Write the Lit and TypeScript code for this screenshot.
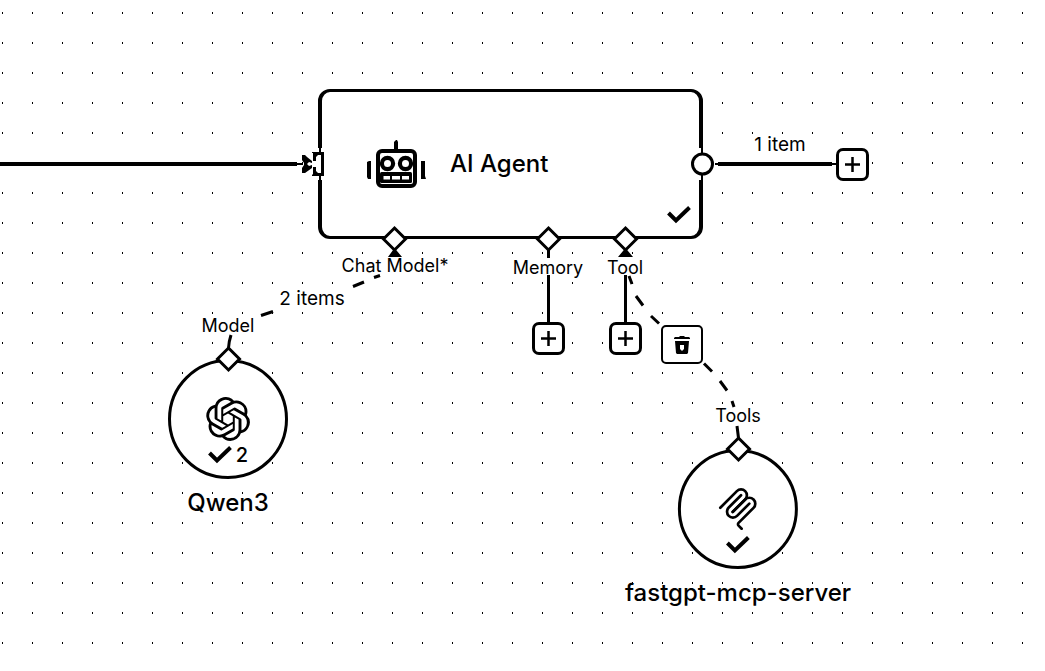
import { LitElement, html, svg, css } from "lit";
import { customElement, property } from "lit/decorators.js";
import { styleMap } from "lit/directives/style-map.js";

type Point = { x: number; y: number };
type Label = Point & { text: string; kind?: string };

const at = (p: Point) => styleMap({ left: `${p.x}px`, top: `${p.y}px` });

const LABELS: Label[] = [
  { text: "1 item", x: 780, y: 145, kind: "count" },
  { text: "Chat Model*", x: 395, y: 266 },
  { text: "Memory", x: 548, y: 268 },
  { text: "Tool", x: 625, y: 268 },
  { text: "2 items", x: 312, y: 299, kind: "count" },
  { text: "Model", x: 228, y: 326 },
  { text: "Tools", x: 738, y: 416 },
];

const ADD_BUTTONS: (Point & { name: string })[] = [
  { name: "Add next step", x: 836, y: 148 },
  { name: "Add memory", x: 532, y: 322 },
  { name: "Add tool", x: 609, y: 322 },
];

const DIAMONDS: Point[] = [
  { x: 394, y: 239 },
  { x: 548, y: 239 },
  { x: 625, y: 239 },
  { x: 228, y: 359 },
  { x: 738, y: 449 },
];

const checkIcon = html`<svg class="check" width="24" height="18" viewBox="0 0 24 18" aria-hidden="true">
  <path d="M1.5 7L9 14.5L22.5 1.5" fill="none" stroke="#000" stroke-width="4" />
</svg>`;

const robotIcon = html`<svg class="robot" width="60" height="50" viewBox="0 0 60 50" aria-hidden="true">
  <path d="M28 11V3L30 1H31L32 3V11Z" />
  <path d="M1 23L3 22H5V40H2L1 38ZM55 22H59V37L60 40H55Z" />
  <rect x="12" y="12" width="37" height="35" rx="4" fill="#fff" stroke="#000" stroke-width="4" />
  <circle cx="21.5" cy="24.5" r="5.6" fill="#fff" stroke="#000" stroke-width="4.2" />
  <circle cx="39.5" cy="24.5" r="5.6" fill="#fff" stroke="#000" stroke-width="4.2" />
  <rect x="14" y="33" width="32" height="11" rx="1.5" />
  <path d="M17.5 37H24V40.5H17.5ZM26 37H34V40.5H26ZM36 37H43V40.5H36Z" fill="#fff" />
</svg>`;

const openaiIcon = html`<svg width="44" height="44" viewBox="0 0 24 24" aria-hidden="true">
  <path d="M22.2819 9.8211a5.9847 5.9847 0 0 0-.5157-4.9108 6.0462 6.0462 0 0 0-6.5098-2.9A6.0651 6.0651 0 0 0 4.9807 4.1818a5.9847 5.9847 0 0 0-3.9977 2.9 6.0462 6.0462 0 0 0 .7427 7.0966 5.98 5.98 0 0 0 .511 4.9107 6.051 6.051 0 0 0 6.5146 2.9001A5.9847 5.9847 0 0 0 13.2599 24a6.0557 6.0557 0 0 0 5.7718-4.2058 5.9894 5.9894 0 0 0 3.9977-2.9001 6.0557 6.0557 0 0 0-.7475-7.0729zm-9.022 12.6081a4.4755 4.4755 0 0 1-2.8764-1.0408l.1419-.0804 4.7783-2.7582a.7948.7948 0 0 0 .3927-.6813v-6.7369l2.02 1.1686a.071.071 0 0 1 .038.052v5.5826a4.504 4.504 0 0 1-4.4945 4.4944zm-9.6607-4.1254a4.4708 4.4708 0 0 1-.5346-3.0137l.142.0852 4.783 2.7582a.7712.7712 0 0 0 .7806 0l5.8428-3.3685v2.3324a.0804.0804 0 0 1-.0332.0615L9.74 19.9502a4.4992 4.4992 0 0 1-6.1408-1.6464zM2.3408 7.8956a4.485 4.485 0 0 1 2.3655-1.9728V11.6a.7664.7664 0 0 0 .3879.6765l5.8144 3.3543-2.0201 1.1685a.0757.0757 0 0 1-.071 0l-4.8303-2.7865A4.504 4.504 0 0 1 2.3408 7.872zm16.5963 3.8558L13.1038 8.364 15.1192 7.2a.0757.0757 0 0 1 .071 0l4.8303 2.7913a4.4944 4.4944 0 0 1-.6765 8.1042v-5.6772a.79.79 0 0 0-.407-.667zm2.0107-3.0231l-.142-.0852-4.7735-2.7818a.7759.7759 0 0 0-.7854 0L9.409 9.2297V6.8974a.0662.0662 0 0 1 .0284-.0615l4.8303-2.7866a4.4992 4.4992 0 0 1 6.6802 4.66zM8.3065 12.863l-2.02-1.1638a.0804.0804 0 0 1-.038-.0567V6.0742a4.4992 4.4992 0 0 1 7.3757-3.4537l-.142.0805L8.704 5.459a.7948.7948 0 0 0-.3927.6813zm1.0976-2.3654l2.602-1.4998 2.6069 1.4998v2.9994l-2.5974 1.4997-2.6067-1.4997Z" />
</svg>`;

const mcpIcon = html`<svg width="44" height="44" viewBox="0 0 180 180" aria-hidden="true">
  <g fill="none" stroke="#000" stroke-width="11" stroke-linecap="round">
    <path d="M18 84.8528L85.8822 16.9706C95.2548 7.59798 110.451 7.59798 119.823 16.9706C129.196 26.3431 129.196 41.5391 119.823 50.9117L68.5581 102.177" />
    <path d="M69.2652 101.47L119.823 50.9117C129.196 41.5391 144.392 41.5391 153.765 50.9117L154.118 51.2652C163.491 60.6378 163.491 75.8338 154.118 85.2063L92.7248 146.6C89.6006 149.724 89.6006 154.789 92.7248 157.913L105.331 170.52" />
    <path d="M102.853 33.9411L52.6482 84.1457C43.2756 93.5183 43.2756 108.714 52.6482 118.087C62.0208 127.459 77.2167 127.459 86.5893 118.087L136.794 67.8822" />
  </g>
</svg>`;

const trashIcon = html`<svg width="16" height="18" viewBox="0 0 16 18" aria-hidden="true">
  <path d="M1 1H5L6 0H10L11 1H15L16 2V3H0V2Z" />
  <path d="M1 5H15L14 17L13 18H3L2 17ZM6 9V13L8 15L10 13V9Z" fill-rule="evenodd" />
</svg>`;

@customElement("sub-node")
class SubNode extends LitElement {
  @property() name = "";
  @property() runs = "";
  @property({ attribute: false }) icon: unknown;

  static styles = css`
    :host { display: flex; flex-direction: column; align-items: center; gap: 8px; }
    .disc {
      box-sizing: border-box;
      width: 120px;
      height: 120px;
      padding-top: 35px;
      border: 3px solid #000;
      border-radius: 50%;
      background: #fff;
      display: flex;
      flex-direction: column;
      align-items: center;
      gap: 4px;
    }
    svg { display: block; }
    .status { display: flex; align-items: center; gap: 4px; height: 20px; font-size: 20px; line-height: 20px; font-weight: 500; }
    .name { font-size: 24px; line-height: 32px; font-weight: 500; white-space: nowrap; }
  `;

  render() {
    return html`
      <div class="disc">
        ${this.icon}
        <div class="status">${checkIcon}${this.runs ? html`<span>${this.runs}</span>` : null}</div>
      </div>
      <div class="name">${this.name}</div>
    `;
  }
}

@customElement("app-root")
class AppRoot extends LitElement {
  static styles = css`
    :host {
      display: block;
      color: #000;
      font-family: Inter, "Liberation Sans", sans-serif;
    }
    .canvas {
      position: relative;
      min-height: 100vh;
      overflow: hidden;
      background: #fff;
    }
    .wires, .handles, .grid { position: absolute; inset: 0; width: 100%; height: 100%; pointer-events: none; }
    .agent {
      position: absolute;
      box-sizing: border-box;
      width: 385px;
      height: 150px;
      padding-left: 44px;
      border: solid #000;
      border-width: 3px 4px;
      border-radius: 12px;
      background: #fff;
      display: flex;
      align-items: center;
      gap: 24px;
    }
    .title { font-size: 24px; line-height: 32px; font-weight: 500; }
    .agent .check { position: absolute; right: 8px; bottom: 12px; }
    sub-node { position: absolute; transform: translateX(-50%); }
    .label {
      position: absolute;
      transform: translate(-50%, -50%);
      font-size: 18px;
      line-height: 20px;
      white-space: nowrap;
    }
    .count { font-size: 19px; }
    button {
      position: absolute;
      box-sizing: border-box;
      display: flex;
      align-items: center;
      justify-content: center;
      padding: 0;
      color: #000;
      background: #fff;
      border: 3px solid #000;
      border-radius: 7px;
    }
    .add { width: 33px; height: 33px; }
    .remove { width: 42px; height: 39px; border-width: 2px; border-radius: 5px; }
  `;

  render() {
    return html`
      <main class="canvas">
        <svg class="grid" aria-hidden="true">
          <defs>
            <pattern id="dots" x="2" y="12" width="30" height="30" patternUnits="userSpaceOnUse">
              <rect width="1" height="2" />
            </pattern>
          </defs>
          <rect width="100%" height="100%" fill="url(#dots)" />
        </svg>
        <svg class="wires" aria-hidden="true">
          <g fill="none" stroke="#000">
            <path stroke-width="4" d="M0 164H297M718 164H832" />
            <path stroke-width="2" d="M296 164H303M715 164H719M832 164H837" />
            <path stroke-width="3" d="M548.5 250V258M548.5 275V323M625.5 275V323" />
            <path stroke-width="3" d="M231 335Q229 341 228.5 348M261 315.5L273 311.5M353 286.5L364 282M374 277.5L380 275.5" />
            <path stroke-width="3" d="M629 276L632 284M636 296L643 305.5M651 316L659 323.5M704 363.5L712 371.5M720 381L727 390.5M732 401L734 407M737 426L738.5 438" />
          </g>
        </svg>

        <section class="agent" style=${at({ x: 318, y: 89 })}>
          ${robotIcon}
          <span class="title">AI Agent</span>
          ${checkIcon}
        </section>
        <sub-node name="Qwen3" runs="2" .icon=${openaiIcon} style=${at({ x: 228, y: 359 })}></sub-node>
        <sub-node name="fastgpt-mcp-server" .icon=${mcpIcon} style=${at({ x: 738, y: 449 })}></sub-node>

        <svg class="handles" aria-hidden="true">
          <path fill="#fff" d="M316 148H319V180H316ZM321 148H324V180H321ZM697 148H701V180H697ZM703 148H706V180H703Z" />
          <rect x="312" y="152" width="12" height="24" fill="#fff" />
          <path d="M312 152H324V176H312V175L313 174V167H316V171L318 173H321V155H318L316 157V161H313V153H312Z" />
          <path d="M302 155H305L307 157L312 161V163L309 162L307 164L309 166L312 165V168L305 173H302V168L304 165V163L302 160Z" />
          <circle cx="702.5" cy="164" r="10" fill="#fff" stroke="#000" stroke-width="3" />
          <path d="M394.5 248L402 257H388ZM625.5 248L633 257H618Z" />
          ${DIAMONDS.map(
            (d) => svg`<path d="M${d.x + 0.5} ${d.y - 11}l11 11l-11 11l-11 -11Z" fill="#fff" stroke="#000" stroke-width="3" />`
          )}
        </svg>

        ${LABELS.map((l) => html`<span class="label ${l.kind ?? ""}" style=${at(l)}>${l.text}</span>`)}
        ${ADD_BUTTONS.map(
          (b) => html`<button class="add" aria-label=${b.name} style=${at(b)}>
            <svg width="15" height="15" viewBox="0 0 15 15" aria-hidden="true">
              <path d="M7.5 0V15M0 7.5H15" stroke="#000" stroke-width="2.5" />
            </svg>
          </button>`
        )}
        <button class="remove" aria-label="Delete connection" style=${at({ x: 661, y: 325 })}>${trashIcon}</button>
      </main>
    `;
  }
}
